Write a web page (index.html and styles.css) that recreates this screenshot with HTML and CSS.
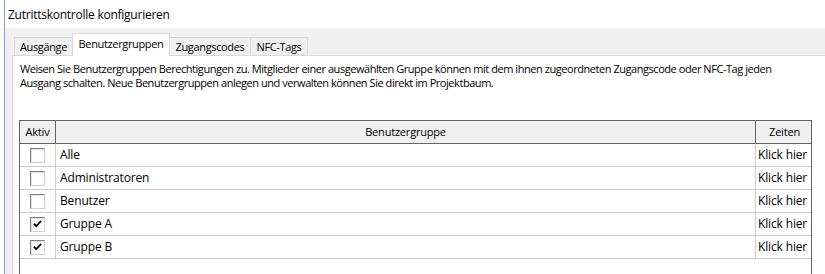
FILE: index.html
```html
<!DOCTYPE html>
<html lang="de">
<head>
<meta charset="utf-8">
<title>Zutrittskontrolle konfigurieren</title>
<link rel="stylesheet" href="styles.css">
</head>
<body>
<div class="window">
  <div class="titlebar">Zutrittskontrolle konfigurieren</div>
  <div class="client">
    <div class="tabs">
      <div class="tab t1">Ausgänge</div>
      <div class="tab t2 active">Benutzergruppen</div>
      <div class="tab t3">Zugangscodes</div>
      <div class="tab t4">NFC-Tags</div>
    </div>
    <div class="panel">
      <p class="desc">Weisen Sie Benutzergruppen Berechtigungen zu. Mitglieder einer ausgewählten Gruppe können mit dem ihnen zugeordneten Zugangscode oder NFC-Tag jeden Ausgang schalten. Neue Benutzergruppen anlegen und verwalten können Sie direkt im Projektbaum.</p>
      <div class="grid">
        <div class="row head">
          <div class="c-act">Aktiv</div>
          <div class="c-name">Benutzergruppe</div>
          <div class="c-time">Zeiten</div>
        </div>
        <div class="row">
          <div class="c-act"><span class="cb"></span></div>
          <div class="c-name">Alle</div>
          <div class="c-time">Klick hier</div>
        </div>
        <div class="row">
          <div class="c-act"><span class="cb"></span></div>
          <div class="c-name">Administratoren</div>
          <div class="c-time">Klick hier</div>
        </div>
        <div class="row">
          <div class="c-act"><span class="cb"></span></div>
          <div class="c-name">Benutzer</div>
          <div class="c-time">Klick hier</div>
        </div>
        <div class="row">
          <div class="c-act"><span class="cb"><svg width="9" height="8" viewBox="0 0 9 8"><path d="M0.8 3.6 L3.2 6.2 L8.2 0.8" fill="none" stroke="#000" stroke-width="1.7"/></svg></span></div>
          <div class="c-name">Gruppe A</div>
          <div class="c-time">Klick hier</div>
        </div>
        <div class="row">
          <div class="c-act"><span class="cb"><svg width="9" height="8" viewBox="0 0 9 8"><path d="M0.8 3.6 L3.2 6.2 L8.2 0.8" fill="none" stroke="#000" stroke-width="1.7"/></svg></span></div>
          <div class="c-name">Gruppe B</div>
          <div class="c-time">Klick hier</div>
        </div>
        <div class="filler"></div>
      </div>
    </div>
  </div>
</div>
</body>
</html>
```
FILE: styles.css
```css
html, body {
  margin: 0;
  padding: 0;
  background: #ffffff;
  overflow: hidden;
}
body {
  font-family: "Open Sans", "Noto Sans", sans-serif;
  font-size: 11px;
  letter-spacing: -0.35px;
  color: #000;
}
.window {
  margin-left: 4px;
  width: 821px;
  height: 274px;
  border-left: 1px solid #7f9fc4;
  box-sizing: border-box;
  display: flex;
  flex-direction: column;
  overflow: hidden;
}
.titlebar {
  height: 28px;
  padding: 1px 0 0 3px;
  box-sizing: border-box;
  line-height: 28px;
  font-size: 12px;
  letter-spacing: -0.25px;
  background: #fff;
}
.client {
  flex: 1;
  background: #f0f0f0;
  padding: 5px 0 0 7px;
  display: flex;
  flex-direction: column;
  min-height: 0;
}
.tabs {
  display: flex;
  align-items: flex-end;
  height: 22px;
  flex: none;
  padding-left: 2px;
}
.tab {
  height: 18px;
  line-height: 17px;
  text-align: center;
  box-sizing: border-box;
  border-left: 1px solid #d9d9d9;
  border-top: 1px solid #d9d9d9;
  background: #f0f0f0;
}
.t1 { width: 58px; }
.t2 { width: 98px; }
.t3 { width: 80px; }
.t4 { width: 58px; border-right: 1px solid #d9d9d9; }
.tab.active {
  height: 23px;
  line-height: 19px;
  background: #fff;
  border-right: 1px solid #d9d9d9;
  position: relative;
  z-index: 1;
  margin-bottom: -1px;
}
.tab.active + .tab {
  border-left: none;
}
.panel {
  flex: 1;
  min-height: 0;
  overflow: hidden;
  background: #fff;
  border-top: 1px solid #d9d9d9;
  border-left: 1px solid #d9d9d9;
  padding: 6px 0 0 7px;
}
.desc {
  margin: 0;
  line-height: 14px;
  width: 790px;
  letter-spacing: -0.45px;
}
.grid {
  margin-top: 30px;
  margin-left: -1px;
  width: 793px;
  border: 1px solid #646464;
  border-bottom: none;
  box-sizing: border-box;
  font-size: 12px;
  letter-spacing: -0.15px;
}
.row {
  display: flex;
  height: 23px;
  border-bottom: 1px solid #cbcbcb;
  box-sizing: border-box;
  line-height: 22px;
}
.row.head {
  background: #f0f0f0;
  border-bottom: 1px solid #646464;
  height: 23px;
  font-size: 11px;
  letter-spacing: -0.2px;
}
.c-act {
  width: 35px;
  border-right: 1px solid #cbcbcb;
  display: flex;
  align-items: center;
  justify-content: center;
}
.head .c-act, .head .c-name {
  border-right: 1px solid #646464;
}
.c-name {
  flex: 1;
  padding-left: 4px;
  border-right: 1px solid #cbcbcb;
}
.head .c-name {
  text-align: center;
  padding-left: 0;
}
.c-time {
  width: 55px;
  padding-left: 2px;
  box-sizing: border-box;
  white-space: nowrap;
}
.head .c-time {
  text-align: center;
}
.cb {
  width: 15px;
  height: 15px;
  box-sizing: border-box;
  border: 1px solid #7d7d7d;
  border-right-color: #d0d0d0;
  border-bottom-color: #d0d0d0;
  box-shadow: inset 1px 1px 0 #e6e6e6;
  background: #fff;
  display: flex;
  align-items: center;
  justify-content: center;
  margin-right: 1px;
}
.filler {
  height: 30px;
}
```
